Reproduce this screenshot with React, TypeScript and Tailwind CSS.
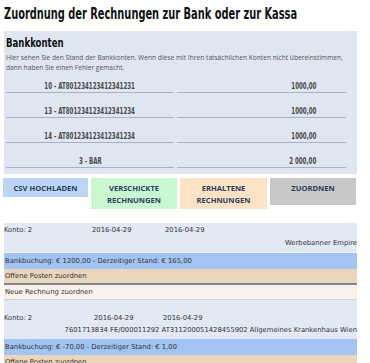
import React from 'react';

const accounts = [
  { name: '10 - AT801234123412341231', amount: '1000,00' },
  { name: '13 - AT801234123412341234', amount: '1000,00' },
  { name: '14 - AT801234123412341234', amount: '1000,00' },
  { name: '3 - BAR', amount: '2 000,00' },
];

const cond = { fontFamily: '"DejaVu Sans", sans-serif' };
const body = { fontFamily: '"Open Sans", "Liberation Sans", sans-serif' };
const entryFont = { fontFamily: '"DejaVu Sans", Verdana, sans-serif' };

export default function App() {
  return (
    <div className="w-[370px] h-[363px] overflow-hidden bg-white text-[#333]" style={body}>
      {/* Title */}
      <h1 className="pl-[4px] pt-[3px] h-[31px] text-[16px] leading-[22px] font-bold text-[#111] whitespace-nowrap" style={cond}>
        <span className="inline-block origin-left scale-x-[0.615]">Zuordnung der Rechnungen zur Bank oder zur Kassa</span>
      </h1>

      {/* Bankkonten */}
      <div className="ml-[4px] w-[353px] bg-[#dfe6f2] pt-[4px] pb-[6px] px-[2px]">
        <h2 className="text-[13px] leading-[16px] font-bold text-[#111]" style={cond}>
          <span className="inline-block origin-left scale-x-[0.66]">Bankkonten</span>
        </h2>
        <p className="mt-[2px] text-[6.65px] leading-[9.5px] text-[#555] whitespace-nowrap">
          Hier sehen Sie den Stand der Bankkonten. Wenn diese mit Ihren tatsächlichen Konten nicht übereinstimmen,
          <br />
          dann haben Sie einen Fehler gemacht.
        </p>
        {accounts.map((a, i) => (
          <div key={a.name} className={`flex gap-[3px] text-[8px] leading-[11px] font-bold text-[#4a4a4a] ${i === 0 ? 'pt-[9px]' : 'pt-[13px]'}`} style={cond}>
            <div className="w-[168px] text-center border-b border-[#a8b2c2]">
              <span className="inline-block origin-center scale-x-[0.69]">{a.name}</span>
            </div>
            <div className="w-[169px] text-right pr-[30px] border-b border-[#a8b2c2]">
              <span className="inline-block origin-right scale-x-[0.69]">{a.amount}</span>
            </div>
          </div>
        ))}
      </div>

      {/* Buttons */}
      <div className="flex items-start gap-[3px] pl-[3px] mt-[4px] text-[7.6px] leading-[12px] font-bold text-[#2b3c5c]" style={body}>
        <div className="w-[85px] h-[19px] bg-[#bcd5f5] text-center pt-[4px]">CSV HOCHLADEN</div>
        <div className="w-[86px] h-[31px] bg-[#c8f7d2] text-center pt-[4px]">VERSCHICKTE<br />RECHNUNGEN</div>
        <div className="w-[87px] h-[31px] bg-[#fde2c6] text-center pt-[4px]">ERHALTENE<br />RECHNUNGEN</div>
        <div className="w-[86px] h-[27px] bg-[#c8c8c8] text-center pt-[4px]">ZUORDNEN</div>
      </div>

      {/* Entries */}
      <div className="ml-[4px] w-[353px] mt-[14px] text-[6.8px] text-[#333]" style={entryFont}>
        <div className="bg-[#e2e9f4] h-[30px] pt-[3px] border-b border-[#f3f5f9]">
          <div className="flex leading-[9px]">
            <span className="w-[88px]">Konto: 2</span>
            <span className="w-[73px]">2016-04-29</span>
            <span>2016-04-29</span>
          </div>
          <div className="text-right leading-[9px] mt-[4px]">Werbebanner Empire</div>
        </div>
        <div className="bg-[#a3c3f2] h-[16px] leading-[16px] pl-[1px]">Bankbuchung: € 1200,00 - Derzeitiger Stand: € 165,00</div>
        <div className="bg-[#e9d6bc] h-[16px] leading-[14px] pl-[1px] border-b-2 border-[#7a8796]">Offene Posten zuordnen</div>
        <div className="bg-[#faf2ea] h-[15px] leading-[14px] pl-[1px] border-b border-[#cfd3d8]">Neue Rechnung zuordnen</div>

        <div className="bg-[#e2e9f4] h-[39px] pt-[14px]">
          <div className="flex leading-[9px]">
            <span className="w-[90px]">Konto: 2</span>
            <span className="w-[69px]">2016-04-29</span>
            <span>2016-04-29</span>
          </div>
          <div className="text-right leading-[9px] mt-[3px] whitespace-nowrap">7601713834 FE/000011292 AT311200051428455902 Allgemeines Krankenhaus Wien</div>
        </div>
        <div className="bg-[#a3c3f2] h-[16px] leading-[16px] pl-[1px]">Bankbuchung: € -70,00 - Derzeitiger Stand: € 1,00</div>
        <div className="bg-[#e9d6bc] h-[16px] leading-[14px] pl-[1px] border-b-2 border-[#7a8796]">Offene Posten zuordnen</div>
      </div>
    </div>
  );
}
